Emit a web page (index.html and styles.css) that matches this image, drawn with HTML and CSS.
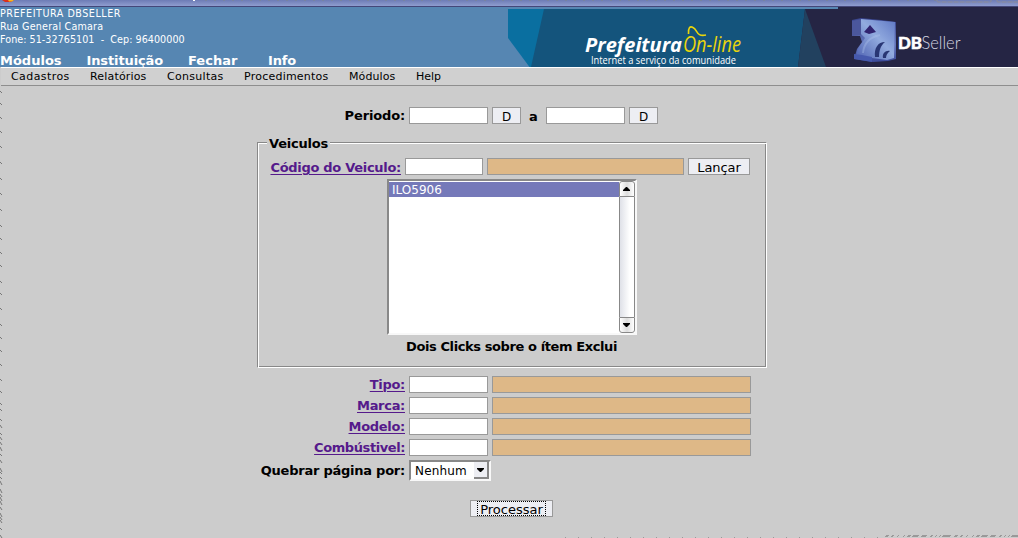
FILE: index.html
```html
<!DOCTYPE html>
<html lang="pt-BR">
<head>
<meta charset="utf-8">
<title>DBSeller</title>
<link rel="stylesheet" href="styles.css">
</head>
<body>
<div class="titlebar">
  <svg width="1018" height="7" viewBox="0 0 1018 7">
    <path d="M2 0H14L11 2H5Z" fill="#d9301e"/><path d="M8 0H14L12 1.5H9Z" fill="#f6b820"/>
    <path d="M194 0V1" stroke="#fff" stroke-width="2"/>
    <path d="M937 0V1Q937 2 938 2H990Q991 2 991 1V0M997 0V1Q997 2 998 2H1018" fill="none" stroke="#8c8c96" stroke-dasharray="5 1"/>
    <path d="M205 .5H936" stroke="#77839f" stroke-dasharray="2 7"/>
  </svg>
</div>
<header class="header">
  <div class="identity">
    <div class="address">
      <div class="a1">PREFEITURA DBSELLER</div>
      <div class="a2">Rua General Camara</div>
      <div class="a3">Fone: 51-32765101&nbsp; - &nbsp;Cep: 96400000</div>
    </div>
    <nav class="tabs"><a class="t1">Módulos</a><a class="t2">Instituição</a><a class="t3">Fechar</a><a class="t4">Info</a></nav>
  </div>
  <svg class="banner" width="510" height="60" viewBox="508 7 510 60">
    <defs>
      <linearGradient id="cube" x1="1" y1="0" x2="0" y2="1"><stop offset="0" stop-color="#5f78c4"/><stop offset=".45" stop-color="#92abdf"/><stop offset="1" stop-color="#4c5fb0"/></linearGradient>
      <linearGradient id="side" x1="0" y1="0" x2="0" y2="1"><stop offset="0" stop-color="#38438c"/><stop offset=".6" stop-color="#6576bc"/><stop offset="1" stop-color="#3b4a99"/></linearGradient>
    </defs>
    <path d="M508 9H1018V67H508Z" fill="#14547c"/>
    <path d="M508 7H838V9H508Z" fill="#5686b2"/>
    <path d="M508 9H544L531 67H508Z" fill="#0a6fa0"/>
    <path d="M508 38L529.5 67H508Z" fill="#5686b2"/>
    <path d="M805 9H838V7H1018V67H798Z" fill="#252544"/>
    <path d="M805 9L826 67H798Z" fill="#22415f"/>
    <text class="brand" x="585" y="52" textLength="97" lengthAdjust="spacingAndGlyphs">Prefeitura</text>
    <text class="online" x="683" y="52" textLength="58" lengthAdjust="spacingAndGlyphs">On-line</text>
    <path d="M688.5 34C688 28 690 25.5 693 27.5C698 30 696 37 706 35" fill="none" stroke="#ead50c" stroke-width="1.6"/>
    <text class="slogan" x="591" y="63.5" textLength="145" lengthAdjust="spacingAndGlyphs">Internet a serviço da comunidade</text>
    <path d="M852 20L861 18L881 20L896 22V59L888 61L873 62L854 59L857 49L862 42L860 36L852 36Z" fill="url(#side)"/>
    <path d="M861 19L895 22L894 58L887 60L872 58L856 56L858 49L865 38L861 34Z" fill="url(#cube)"/>
    <path d="M852 21L861 19L861 35L852 36Z" fill="#4b579c"/>
    <path d="M854 54L862 55L872 57V62L854 59Z" fill="#4659ad"/>
    <path d="M870 25L876 32L869 34L864 32Z" fill="#30236f"/>
    <path d="M875 57C874 48 878 42 885 42C881 45 879 50 879 57ZM883 58C882 53 886 50 890 51C887 53 886 56 886 58Z" fill="#293674"/>
    <path d="M863 53C864 43 870 37 880 35" fill="none" stroke="#b3c7ee" stroke-width="2" opacity=".35"/>
    <text class="db" x="898" y="48.5" textLength="24" lengthAdjust="spacingAndGlyphs">DB</text>
    <text class="seller" x="921.5" y="48.5" textLength="39" lengthAdjust="spacingAndGlyphs">Seller</text>
  </svg>
</header>
<nav class="menu"><a class="m1">Cadastros</a><a class="m2">Relatórios</a><a class="m3">Consultas</a><a class="m4">Procedimentos</a><a class="m5">Módulos</a><a class="m6">Help</a></nav>
<main class="content">
  <svg class="edge" width="1018" height="452" viewBox="0 86 1018 452">
    <path d="M0 91l2 2M0 103l2 2M0 117l2 2M0 131l2 2M0 146l2 2M0 162l2 2M0 178l2 2M0 193l2 2M0 209l2 2M0 225l2 2M0 238l2 2M0 252l2 2M0 265l2 2M0 281l2 2M0 293l2 2M0 308l2 2M0 324l2 2M0 337l2 2M0 350l2 2M0 364l2 2M0 379l2 2M0 391l2 2M0 403l2 2M0 409l2 2M0 419l2 2M0 425l2 3M0 433l2 2M0 437l2 3M0 442l2 3M0 447l2 4M0 454l2 2M0 460l2 3M0 468l2 4M0 472l2 2M0 477l2 2M0 481l2 4M0 489l2 4M0 494l2 3M0 497l2 4M0 501l2 4M0 507l2 3M0 513l2 4M0 517l2 3M0 520l2 3M0 528l2 2M0 535l2 3" stroke="#777" fill="none"/>
    <path d="M565 537.5H884" stroke="#999" stroke-dasharray="1 12"/>
    <path d="M886 535.5H1018" stroke="#999" stroke-dasharray="3 3 2 4 1 5 1 3 3 2 6 3 5 4 2 3 1 3 1 2 8 4"/>
    <path d="M885 536.5H1018" stroke="#999" stroke-dasharray="3 3 2 4 1 5 1 3 3 2 6 3 5 4 2 3 1 3 1 2 8 4"/>
  </svg>
  <form class="report">
    <div class="row period"><label class="lbl w-per">Periodo:</label><input class="field"><button type="button" class="btn day">D</button><b class="to">a</b><input class="field"><button type="button" class="btn day">D</button></div>
    <section class="group">
      <h2 class="legend"><span>Veiculos</span></h2>
      <div class="row vehicle"><a class="lbl link w-cod">Código do Veiculo:</a><input class="field code"><span class="tan short"></span><button type="button" class="btn add">Lançar</button></div>
      <div class="list">
        <div class="options"><div class="option">ILO5906</div></div>
        <div class="scroll">
          <span class="arrow first"><svg width="7" height="4"><path d="M0 4V3L3 0H4L7 3V4Z"/></svg></span>
          <span class="track"></span>
          <span class="arrow last"><svg width="7" height="4"><path d="M0 0V1L3 4H4L7 1V0Z"/></svg></span>
        </div>
      </div>
      <div class="hint"><span>Dois Clicks sobre o ítem Exclui</span></div>
    </section>
    <div class="filters">
      <div class="row"><a class="lbl link w-tip">Tipo:</a><input class="field"><span class="tan"></span></div>
      <div class="row"><a class="lbl link w-mar">Marca:</a><input class="field"><span class="tan"></span></div>
      <div class="row"><a class="lbl link w-mod">Modelo:</a><input class="field"><span class="tan"></span></div>
      <div class="row"><a class="lbl link w-com">Combústivel:</a><input class="field"><span class="tan"></span></div>
    </div>
    <div class="row break"><label class="lbl w-que">Quebrar página por:</label><div class="select"><span>Nenhum</span><i class="drop"><svg width="7" height="4"><path d="M0 0V1L3 4H4L7 1V0Z"/></svg></i></div></div>
    <button type="button" class="btn process"><span>Processar</span></button>
  </form>
</main>
</body>
</html>
```
FILE: styles.css
```css
* { box-sizing: border-box; }
body { margin: 0; width: 1018px; height: 538px; overflow: hidden; background: #ccc; color: #000; font: 13px/17px "DejaVu Sans", sans-serif; }
svg { display: block; }
.titlebar { height: 7px; background: linear-gradient(#6d7cb5, #8f9dcf 6px, #444779 6px); }
.header { display: flex; height: 60px; background: #5686b2; color: #fff; }
.identity { width: 508px; white-space: nowrap; }
.address { height: 46px; font-size: 9.6px; line-height: 13px; }
.a1 { letter-spacing: .52px; }
.a2 { letter-spacing: .2px; }
.a3 { letter-spacing: .04px; }
.tabs { display: flex; height: 14px; font-size: 13px; line-height: 15px; font-weight: bold; }
.t1 { width: 86.5px; }
.t2 { width: 101.5px; letter-spacing: -.12px; }
.t3 { width: 80px; }
.t4 { letter-spacing: -.2px; }
.banner { flex: none; }
.brand { font: italic bold 20px "Open Sans", sans-serif; fill: #fff; }
.online { font: italic 21px "Open Sans", sans-serif; fill: #ead50c; }
.slogan { font: 10.5px "Open Sans", sans-serif; fill: #fff; }
.db { font: 900 17px "Lato", sans-serif; fill: #fff; stroke: #fff; stroke-width: .5px; }
.seller { font: 300 18.5px "Lato", sans-serif; fill: #d5d5e2; }
.menu { display: flex; height: 19px; margin-left: 1px; padding-left: 10px; border-top: 1px solid #fff; border-bottom: 1px solid #8e8e8e; background: #d0d0d0; font-size: 11px; line-height: 17px; }
.m1 { width: 79px; letter-spacing: .42px; }
.m2 { width: 77px; letter-spacing: .17px; }
.m3 { width: 77px; letter-spacing: .3px; }
.m4 { width: 105px; letter-spacing: .23px; }
.m5 { width: 67px; letter-spacing: .1px; }
.content { position: relative; height: 452px; }
.edge { position: absolute; left: 0; top: 0; }
.report { display: flex; flex-direction: column; width: 510px; margin-left: 257px; padding-top: 21px; }
.row { display: flex; gap: 4px; height: 17px; }
.lbl { width: 148px; text-align: right; font-weight: bold; white-space: nowrap; }
.w-per { letter-spacing: -.15px; }
.w-cod { letter-spacing: -.3px; line-height: 19px; }
.w-tip, .w-mod, .w-mar { letter-spacing: -.3px; }
.w-com { letter-spacing: -.42px; }
.w-que { letter-spacing: -.24px; }
.link { color: #551a8b; text-decoration: underline; text-decoration-thickness: 1px; text-underline-offset: 2px; }
.field { width: 79px; height: 17px; border: 1px solid #999; border-radius: 0; padding: 0 2px; background: #fff; font: inherit; }
.btn { height: 17px; margin: 0; padding: 1px 0 0; border: 1px solid #999; border-radius: 0; background: #edeef3; color: #000; font: 13px/16px "DejaVu Sans", sans-serif; text-align: center; white-space: nowrap; }
.day { width: 29px; font-size: 12px; }
.to { width: 17px; text-align: center; line-height: 19px; }
.group { height: 226px; margin-top: 18px; border: 1px solid #888; border-right-color: #fff; border-bottom-color: #fff; box-shadow: inset 1px 1px #fff, inset -1px -1px #888; }
.legend { display: flex; height: 15px; margin: -7px 0 0 9px; font: bold 13px/16px "DejaVu Sans", sans-serif; letter-spacing: -.2px; }
.legend span { width: 63px; padding-left: 2px; background: #ccc; }
.vehicle { margin: 7px 0 4px 9px; }
.vehicle .lbl { width: 134px; }
.code { width: 78px; }
.tan { width: 259px; height: 17px; border: 1px solid #999; background: #deb887; }
.short { width: 197px; }
.add { width: 62px; letter-spacing: -.1px; }
.list { display: flex; width: 250px; height: 156px; margin-left: 129px; border: 2px solid; border-color: #888 #f8f8f8 #f8f8f8 #888; background: #fff; }
.options { flex: 1; }
.option { height: 15px; margin-top: 1px; padding-left: 3px; background: #7579b9; color: #fff; font-size: 12px; line-height: 17px; }
.scroll { display: flex; flex-direction: column; width: 16px; }
.arrow { display: flex; align-items: center; justify-content: center; height: 16px; border: 1px solid #888; background: linear-gradient(90deg, #fff, #ddd 50%, #fff); }
.first { border-radius: 3px 3px 0 0; }
.last { border-radius: 0 0 3px 3px; }
.arrow svg { margin-right: 1px; }
.track { flex: 1; border: solid #888; border-width: 0 1px; background: linear-gradient(90deg, #dfe1e8, #fff 70%); }
.hint { margin-top: 3px; padding-right: 1px; text-align: center; font-weight: bold; letter-spacing: -.4px; }
.filters { display: flex; flex-direction: column; gap: 4px; margin-top: 8px; }
.break { height: 21px; margin-top: 4px; line-height: 21px; }
.select { display: flex; justify-content: space-between; width: 82px; height: 21px; padding-left: 4px; border: 2px solid; border-color: #888 #f8f8f8 #f8f8f8 #888; background: #fff; font-size: 12px; line-height: 18px; letter-spacing: .15px; }
.drop { display: flex; align-items: center; justify-content: center; width: 15px; height: 17px; border: solid #888; border-width: 0 2px 2px 0; background: #edeef3; }
.process { display: flex; width: 83px; margin: 19px 0 0 213px; padding: 0 6px; }
.process span { width: 69px; height: 15px; border: 1px dotted #000; line-height: 16px; }
```
